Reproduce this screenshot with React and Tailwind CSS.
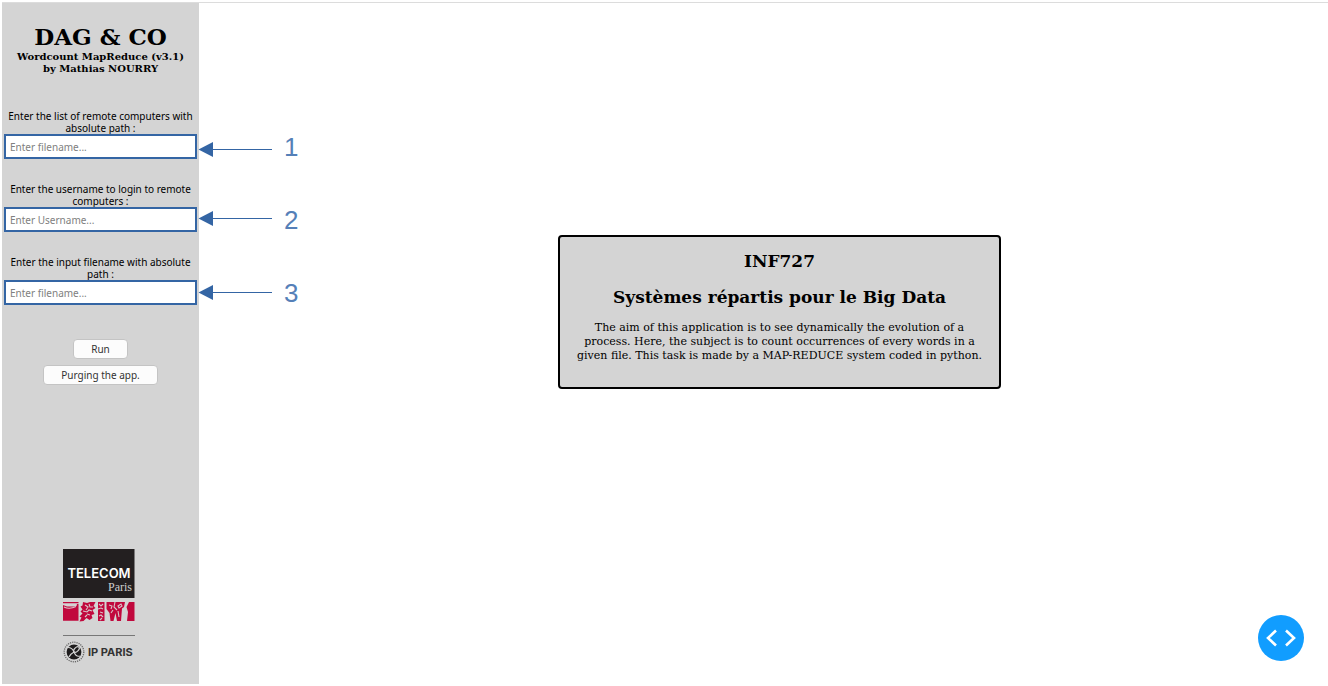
import React from "react";

const FIELDS = [
  {
    id: "hosts",
    label: "Enter the list of remote computers with absolute path :",
    placeholder: "Enter filename...",
    step: 1,
    lineY: 18,
  },
  {
    id: "username",
    label: "Enter the username to login to remote computers :",
    placeholder: "Enter Username...",
    step: 2,
    lineY: 14,
  },
  {
    id: "input-file",
    label: "Enter the input filename with absolute path :",
    placeholder: "Enter filename...",
    step: 3,
    lineY: 15,
  },
];

function Callout({ step, lineY }) {
  return (
    <div className="pointer-events-none absolute left-full top-1/2 flex -translate-y-1/2 items-center gap-3 pl-px">
      <svg width="74" height="32" viewBox="0 0 74 32" aria-hidden="true">
        <path d={`M14 ${lineY}.5H74`} stroke="#3465a4" strokeWidth="1" />
        <path d={`M0.5 ${lineY}.5l14.5-7.5v15z`} fill="#3465a4" />
      </svg>
      <span className="font-['Liberation_Sans',sans-serif] text-[26px] leading-8 text-[#5580b8]">{step}</span>
    </div>
  );
}

function Field({ id, label, placeholder, step, lineY }) {
  return (
    <div className="flex flex-col">
      <label htmlFor={id} className="text-center text-[10px] leading-3 text-black">
        {label}
      </label>
      <div className="relative">
        <input
          id={id}
          type="text"
          placeholder={placeholder}
          className="block h-[25px] w-full border-2 border-[#3465a4] bg-white px-1 text-[10px] text-black placeholder:text-[#808080] focus:outline-none"
        />
        <Callout step={step} lineY={lineY} />
      </div>
    </div>
  );
}

function Button({ children }) {
  return (
    <button
      type="button"
      className="h-5 rounded-sm border border-[#c4c4c4] bg-[#fcfcfc] px-[17px] text-[10px] leading-4 text-[#333]"
    >
      {children}
    </button>
  );
}

function Logo() {
  return (
    <svg width="76" height="116" viewBox="0 0 76 116" role="img" aria-label="Telecom Paris, IP Paris">
      <rect x="2" y="0" width="71.5" height="49" fill="#231f20" />
      <text x="38" y="29" textAnchor="middle" fontFamily="Inter, sans-serif" fontSize="13" fontWeight="600" fill="#fff">
        TELECOM
      </text>
      <text x="71" y="42" textAnchor="end" fontFamily="'Liberation Serif', serif" fontSize="12" fill="#d0d0d0">
        Paris
      </text>
      <g fill="#c1083d">
        <path d="M2 53h15.5v1.2H2zM2 56l4 1.6 7-.2 2.5-.4.5-2h1.5v16.8H2z" />
        <path d="M22 53l4 1 3-1 5.5 0-2 4 2 2-3 2 2 4-3 1 1 3-3 2-3-2-3 3-4 .5 2-4-2-1 3-3-2-2 2-2-2-3 2-1z" />
        <path d="M37 53h6.500v19H37z" />
        <path d="M45.500 53h18.500l-1 5-2 1.500-1 12.500h-4l-1.500-8-2 8h-3l-1-8-3-4z" />
        <path d="M68 53h5.500v19H66l1-9-1.500-5z" />
      </g>
      <g fill="none" stroke="#d8c4c9" strokeWidth="1.1">
        <path d="M3 58c4 2 9 1 12-.5" />
        <path d="M24 56l3 2-2 3M28 55l1 3 3 0M22 62l4 1 2-2 3 1M26 65l3 1M24 68l2-2" />
        <path d="M38 55l2 2 2-2M37 60l3-1 2 1M39 63l3 1M38 67l2-1 2 2M39 71l2-2" />
        <path d="M48 56l3 1-1 3M54 53l-1 5 3 3M57 57l3-2 1 2-3 2zM50 64l2-3M57 62l1 6" />
      </g>
      <path d="M2 86.5h72" stroke="#777" strokeWidth="1.2" />
      <circle cx="13" cy="103" r="9.8" fill="none" stroke="#666" strokeWidth="1.3" strokeDasharray="1.2 1" />
      <circle cx="13" cy="103" r="7.4" fill="#1d1b1c" />
      <g fill="none" stroke="#d4d4d4" strokeWidth="1.2">
        <path d="M7 98.500c3 0 5 2 6 4.500s3 5 6 4M13 103c-2 1-4 3-5 5" />
        <ellipse cx="15.500" cy="100.500" rx="3.400" ry="2" transform="rotate(-45 15.500 100.500)" />
      </g>
      <text x="27" y="107" fontFamily="Inter, sans-serif" fontSize="11" fontWeight="700" fill="#333">
        IP PARIS
      </text>
    </svg>
  );
}

export default function App() {
  return (
    <div className="flex min-h-screen flex-col bg-white pb-[2px] pl-[2px] pt-[2px] text-black">
      <div className="flex grow border-t border-[#dcdcdc]">
        <aside className="flex w-[197px] shrink-0 flex-col bg-[#d4d4d4] px-[2px] font-['Noto_Sans',sans-serif]">
          <header className="flex flex-col pt-5 text-center font-['DejaVu_Serif',serif] font-bold">
            <h1 className="text-[23px] leading-7">DAG &amp; CO</h1>
            <p className="text-[10px] leading-3">
              Wordcount MapReduce (v3.1)
              <br />
              by Mathias NOURRY
            </p>
          </header>
          <form className="flex flex-col gap-6 pt-[35px]">
            {FIELDS.map((field) => (
              <Field key={field.id} {...field} />
            ))}
            <div className="flex flex-col items-center gap-[6px] pt-[10px]">
              <Button>Run</Button>
              <Button>Purging the app.</Button>
            </div>
          </form>
          <div className="mt-auto flex justify-center pb-[19px] pr-1">
            <Logo />
          </div>
        </aside>
        <main className="relative flex grow items-center justify-center pb-[64px] pl-8">
          <section className="w-[443px] rounded-sm border-2 border-black bg-[#d4d4d4] px-3 pb-6 pt-[14px] text-center font-['DejaVu_Serif',serif]">
            <h2 className="text-[17px] font-bold leading-5">INF727</h2>
            <h2 className="pt-4 text-[17px] font-bold leading-5">Systèmes répartis pour le Big Data</h2>
            <p className="pt-[14px] text-[11px] leading-[14px]">
              The aim of this application is to see dynamically the evolution of a process. Here, the subject is to
              count occurrences of every words in a given file. This task is made by a MAP-REDUCE system coded in
              python.
            </p>
          </section>
          <button
            type="button"
            aria-label="Open developer tools"
            className="absolute bottom-[23px] right-6 flex size-[46px] items-center justify-center rounded-full bg-[#119dff]"
          >
            <svg width="30" height="18" viewBox="0 0 30 18" fill="none" stroke="#fff" strokeWidth="2.6" aria-hidden="true">
              <path d="M10 1.5L2 9l8 7.5M20 1.5L28 9l-8 7.5" />
            </svg>
          </button>
        </main>
      </div>
    </div>
  );
}
